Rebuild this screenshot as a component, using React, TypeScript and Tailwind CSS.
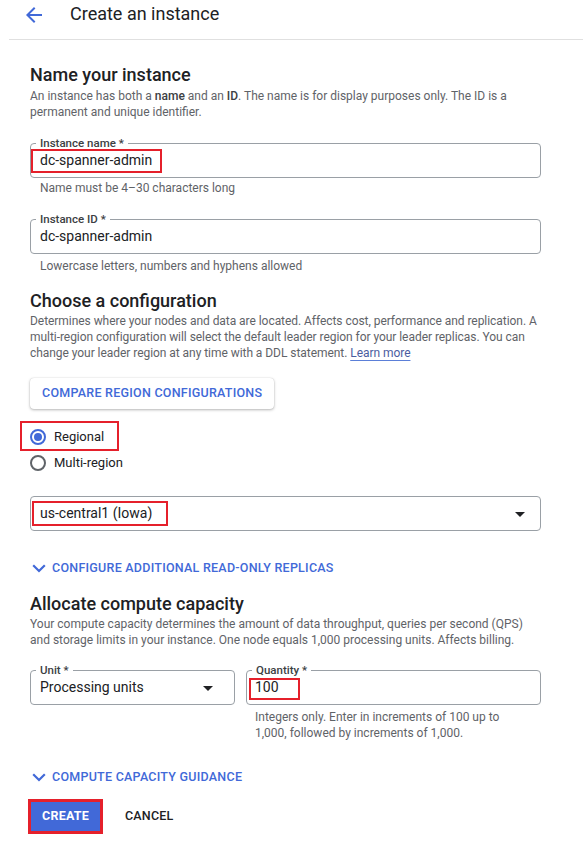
import React from "react";

const RED = "border-[#e5202b]";

function ArrowDrop() {
  return (
    <svg width="24" height="24" viewBox="0 0 24 24" className="shrink-0">
      <path d="M7 10l5 5 5-5z" fill="#202124" />
    </svg>
  );
}

function Chevron() {
  return (
    <svg width="14" height="9" viewBox="0 0 14 9" className="ml-[2px] shrink-0">
      <polyline points="1.2,1.2 7,7 12.8,1.2" fill="none" stroke="#4169d8" strokeWidth="2.2" />
    </svg>
  );
}

function Field({
  label,
  children,
  className = "",
}: {
  label: string;
  children: React.ReactNode;
  className?: string;
}) {
  return (
    <div className={"relative h-[35px] rounded-[4px] border border-[#9aa0a6] " + className}>
      <span className="absolute -top-[8px] left-[5px] bg-white px-[4px] text-[11.5px] font-medium leading-[14px] text-[#3c4043]">
        {label}
      </span>
      {children}
    </div>
  );
}

export default function App() {
  return (
    <div className="min-h-screen bg-white" style={{ fontFamily: "Roboto, 'Liberation Sans', sans-serif" }}>
      {/* Header */}
      <div className="ml-[9px] flex h-[40px] items-start border-b border-[#e0e0e0] pl-[13px]">
        <svg width="24" height="24" viewBox="0 0 24 24" className="mt-[3px]">
          <path d="M20 11H7.83l5.59-5.59L12 4l-8 8 8 8 1.41-1.41L7.83 13H20v-2z" fill="#4169d8" />
        </svg>
        <div className="ml-[24px] text-[18px] leading-[28px] text-[#202124]">Create an instance</div>
      </div>

      <div className="pl-[30px] pr-[42px]">
        {/* Section 1 */}
        <h2 className="mt-[23px] text-[18px] font-medium leading-[24px] text-[#202124]">Name your instance</h2>
        <p className="mt-[1px] text-[12px] leading-[16px] text-[#5f6368]">
          An instance has both a <span className="font-medium text-[#3c4043]">name</span> and an{" "}
          <span className="font-medium text-[#3c4043]">ID</span>. The name is for display purposes only. The ID is a
          <br />
          permanent and unique identifier.
        </p>

        <Field label="Instance name *" className="mt-[23px]">
          <div className="flex h-full items-center pl-[9px] text-[14px] text-[#202124]">dc-spanner-admin</div>
          <span className={"absolute left-0 top-[5px] h-[24px] w-[131px] border-2 " + RED}></span>
        </Field>
        <p className="mt-[2px] pl-[10px] text-[12px] leading-[16px] text-[#5f6368]">
          Name must be 4–30 characters long
        </p>

        <Field label="Instance ID *" className="mt-[23px]">
          <div className="flex h-full items-center pl-[9px] text-[14px] text-[#202124]">dc-spanner-admin</div>
        </Field>
        <p className="mt-[4px] pl-[10px] text-[12px] leading-[16px] text-[#5f6368]">
          Lowercase letters, numbers and hyphens allowed
        </p>

        {/* Section 2 */}
        <h2 className="mt-[15px] text-[18px] font-medium leading-[24px] text-[#202124]">Choose a configuration</h2>
        <p className="-mr-[12px] whitespace-nowrap text-[12px] leading-[16px] tracking-[-0.05px] text-[#5f6368]">
          Determines where your nodes and data are located. Affects cost, performance and replication. A
          <br />
          multi-region configuration will select the default leader region for your leader replicas. You can
          <br />
          change your leader region at any time with a DDL statement.{" "}
          <span className="text-[#4b5d9f] underline decoration-[#5b7fd8] underline-offset-[3px]">Learn more</span>
        </p>

        <button className="mt-[17px] h-[31px] rounded-[4px] bg-white px-[12px] text-[12.5px] font-medium tracking-[0.25px] text-[#4169d8] shadow-[0_1px_3px_rgba(0,0,0,0.28),0_0_1px_rgba(0,0,0,0.2)]">
          COMPARE REGION CONFIGURATIONS
        </button>

        <div className="mt-[15px] flex flex-col">
          <div className="relative flex h-[26px] items-center">
            <span className="flex h-[16px] w-[16px] items-center justify-center rounded-full border-2 border-[#4169d8]">
              <span className="h-[8px] w-[8px] rounded-full bg-[#4169d8]"></span>
            </span>
            <span className="ml-[8px] text-[13px] text-[#202124]">Regional</span>
            <span className={"absolute -left-[10px] -top-[3px] h-[30px] w-[99px] border-2 " + RED}></span>
          </div>
          <div className="flex h-[26px] items-center">
            <span className="h-[16px] w-[16px] rounded-full border-2 border-[#5f6368]"></span>
            <span className="ml-[8px] text-[13px] text-[#202124]">Multi-region</span>
          </div>
        </div>

        <div className="relative mt-[20px] flex h-[35px] items-center justify-between rounded-[4px] border border-[#9aa0a6] pl-[9px] pr-[8px]">
          <span className="text-[14px] text-[#202124]">us-central1 (Iowa)</span>
          <ArrowDrop />
          <span className={"absolute left-[1px] top-[4px] h-[25px] w-[136px] border-2 " + RED}></span>
        </div>

        <div className="mt-[29px] flex items-center gap-[6px] text-[12.5px] font-medium leading-[16px] tracking-[0.25px] text-[#4169d8]">
          <Chevron />
          <span>CONFIGURE ADDITIONAL READ-ONLY REPLICAS</span>
        </div>

        {/* Section 3 */}
        <h2 className="mt-[16px] text-[18px] font-medium leading-[24px] text-[#202124]">Allocate compute capacity</h2>
        <p className="text-[12px] leading-[16px] text-[#5f6368]">
          Your compute capacity determines the amount of data throughput, queries per second (QPS)
          <br />
          and storage limits in your instance. One node equals 1,000 processing units. Affects billing.
        </p>

        <div className="mt-[22px] flex gap-[11px]">
          <Field label="Unit *" className="w-[205px] shrink-0">
            <div className="flex h-full items-center justify-between pl-[9px] pr-[14px]">
              <span className="text-[14px] text-[#202124]">Processing units</span>
              <ArrowDrop />
            </div>
          </Field>
          <div className="flex flex-1 flex-col">
            <Field label="Quantity *">
              <div className="flex h-full items-center pl-[8px] text-[14px] text-[#202124]">100</div>
              <span className={"absolute left-[2px] top-[7px] h-[22px] w-[51px] border-2 " + RED}></span>
            </Field>
            <p className="mt-[4px] pl-[9px] text-[12px] leading-[16px] text-[#5f6368]">
              Integers only. Enter in increments of 100 up to
              <br />
              1,000, followed by increments of 1,000.
            </p>
          </div>
        </div>

        <div className="mt-[28px] flex items-center gap-[6px] text-[12.5px] font-medium leading-[16px] tracking-[0.25px] text-[#4169d8]">
          <Chevron />
          <span>COMPUTE CAPACITY GUIDANCE</span>
        </div>

        <div className="mt-[17px] flex items-center">
          <button className="ml-[1px] h-[29px] w-[69px] bg-[#4169d8] text-[12.5px] font-bold tracking-[0.2px] text-white outline-[3px] outline-solid outline-[#e5202b]">
            CREATE
          </button>
          <button className="ml-[25px] text-[12.5px] font-medium tracking-[0.2px] text-[#202124]">CANCEL</button>
        </div>
      </div>
    </div>
  );
}
